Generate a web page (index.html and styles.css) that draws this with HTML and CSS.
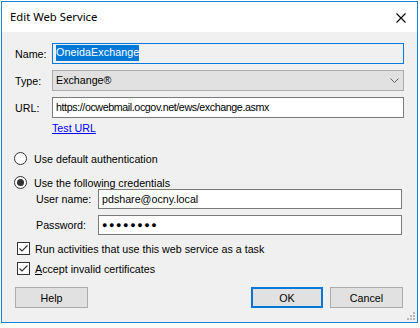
FILE: index.html
```html
<!DOCTYPE html>
<html lang="en">
<head>
    <meta charset="UTF-8">
    <title>Edit Web Service</title>
    <link rel="stylesheet" href="styles.css">
</head>
<body>

<div class="window">
    <div class="titlebar">
        <span class="title">Edit Web Service</span>
        <svg class="close" width="10" height="10" viewBox="0 0 10 10">
            <path d="M0.5 0.5 L9.5 9.5 M9.5 0.5 L0.5 9.5" stroke="#000" stroke-width="1.1" fill="none"/>
        </svg>
    </div>

    <div class="client">
        <div class="row row-name">
            <span class="label">Name:</span>
            <div class="field focused"><span class="selected">OneidaExchange</span></div>
        </div>
        <div class="row row-type">
            <span class="label">Type:</span>
            <div class="field combo">
                <span>Exchange®</span>
                <svg width="9" height="5" viewBox="0 0 9 5">
                    <path d="M0.5 0.5 L4.5 4.5 L8.5 0.5" stroke="#606060" stroke-width="1" fill="none"/>
                </svg>
            </div>
        </div>
        <div class="row row-url">
            <span class="label">URL:</span>
            <div class="field url">https://ocwebmail.ocgov.net/ews/exchange.asmx</div>
        </div>
        <a class="link" href="#">Test URL</a>

        <div class="option option-first">
            <span class="radio"></span>
            <span>Use default authentication</span>
        </div>
        <div class="option">
            <span class="radio checked"></span>
            <span>Use the following credentials</span>
        </div>

        <div class="cred cred-user">
            <span class="label">User name:</span>
            <div class="field">pdshare@ocny.local</div>
        </div>
        <div class="cred">
            <span class="label">Password:</span>
            <div class="field dots">●●●●●●●●</div>
        </div>

        <div class="check check-first">
            <span class="box">
                <svg width="11" height="11" viewBox="0 0 11 11">
                    <path d="M1.5 5.5 L4 8 L9.5 2.5" stroke="#333" stroke-width="1.2" fill="none"/>
                </svg>
            </span>
            <span>Run activities that use this web service as a task</span>
        </div>
        <div class="check">
            <span class="box">
                <svg width="11" height="11" viewBox="0 0 11 11">
                    <path d="M1.5 5.5 L4 8 L9.5 2.5" stroke="#333" stroke-width="1.2" fill="none"/>
                </svg>
            </span>
            <span><u>A</u>ccept invalid certificates</span>
        </div>

        <div class="buttons">
            <button class="btn">Help</button>
            <div class="spacer"></div>
            <button class="btn default">OK</button>
            <button class="btn">Cancel</button>
        </div>

        <svg class="grip" width="9" height="9" viewBox="0 0 9 9">
            <rect x="6" y="0" width="2" height="2" fill="#b8b8b8"/>
            <rect x="3" y="3" width="2" height="2" fill="#b8b8b8"/>
            <rect x="6" y="3" width="2" height="2" fill="#b8b8b8"/>
            <rect x="0" y="6" width="2" height="2" fill="#b8b8b8"/>
            <rect x="3" y="6" width="2" height="2" fill="#b8b8b8"/>
            <rect x="6" y="6" width="2" height="2" fill="#b8b8b8"/>
        </svg>
    </div>
</div>

</body>
</html>
```

FILE: styles.css
```css
body {
    margin: 0;
    padding: 1px 0 0 1px;
    background: #ffffff;
    font-family: 'Liberation Sans', Arial, sans-serif;
    font-size: 10.7px;
    color: #000;
}

.window {
    width: 415px;
    border: 1px solid #1883d7;
    background: #f0f0f0;
}

.titlebar {
    height: 30px;
    background: #ffffff;
    display: flex;
    align-items: center;
    padding: 0 11px 0 8px;
}

.title {
    font-family: 'Noto Sans', 'Open Sans', sans-serif;
    font-size: 11.3px;
    flex: 1;
    padding-bottom: 1px;
}

.close {
    margin-top: 1px;
}

.client {
    height: 290px;
    padding: 0 13px 0 13px;
    display: flex;
    flex-direction: column;
    position: relative;
    box-sizing: border-box;
}

.row {
    display: flex;
    align-items: center;
    margin-top: 6px;
}

.row-name {
    margin-top: 11px;
}

.row .label {
    width: 37px;
}

.field {
    flex: 1;
    height: 21px;
    box-sizing: border-box;
    border: 1px solid #7a7a7a;
    background: #ffffff;
    display: flex;
    align-items: center;
    padding: 0 3px 1px;
    white-space: nowrap;
}

.field.focused {
    border-color: #0078d7;
    background: #f0f0f0;
}

.selected {
    background: #0078d7;
    color: #fff;
    padding: 1px 0 2px;
    line-height: 13px;
    letter-spacing: 0.1px;
}

.combo {
    background: #e1e1e1;
    border-color: #adadad;
    justify-content: space-between;
    padding: 0 4px 1px 3px;
}

.url {
    letter-spacing: -0.4px;
}

.link {
    color: #0000ff;
    margin: 4px 0 0 37px;
    align-self: flex-start;
    line-height: 13px;
}

.option {
    display: flex;
    align-items: center;
    gap: 7px;
    margin-top: 11px;
    height: 13px;
}

.option-first {
    margin-top: 17px;
}

.radio {
    width: 13px;
    height: 13px;
    box-sizing: border-box;
    border: 1px solid #333;
    border-radius: 50%;
    background: #fff;
    margin-left: -1px;
    display: flex;
    align-items: center;
    justify-content: center;
}

.radio.checked::after {
    content: "";
    width: 7px;
    height: 7px;
    border-radius: 50%;
    background: #333;
}

.cred {
    display: flex;
    align-items: center;
    margin-top: 6px;
    padding-right: 2px;
}

.cred-user {
    margin-top: 0;
}

.cred .label {
    width: 62px;
    padding-left: 21px;
}

.cred .field {
    height: 20px;
}

.dots {
    font-size: 9px;
    letter-spacing: 1.6px;
}

.check {
    display: flex;
    align-items: center;
    gap: 5px;
    margin-top: 7px;
    height: 13px;
    padding-left: 2px;
}

.check-first {
    margin-top: 7px;
}

.box {
    width: 13px;
    height: 13px;
    box-sizing: border-box;
    border: 1px solid #333;
    background: #fff;
    display: flex;
    align-items: center;
    justify-content: center;
}

.buttons {
    display: flex;
    gap: 7px;
    margin-top: 12px;
    padding-right: 1px;
}

.spacer {
    flex: 1;
}

.btn {
    width: 73px;
    height: 21px;
    box-sizing: border-box;
    border: 1px solid #adadad;
    background: #e1e1e1;
    font-family: 'Liberation Sans', Arial, sans-serif;
    font-size: 10.7px;
    color: #000;
    padding: 0;
}

.btn.default {
    width: 72px;
    border: 2px solid #0078d7;
}

.grip {
    position: absolute;
    right: 1px;
    bottom: 1px;
}
```
